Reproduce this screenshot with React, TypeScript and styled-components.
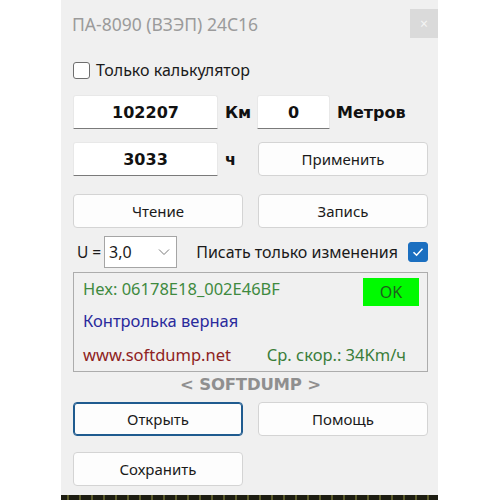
import * as React from 'react';
import styled, { createGlobalStyle } from 'styled-components';

const GlobalStyle = createGlobalStyle`
  html, body {
    margin: 0;
    padding: 0;
    background: #ffffff;
  }
  body {
    font-family: "Noto Sans", "Open Sans", sans-serif;
  }
`;

const Dialog = styled.div`
  width: 377px;
  height: 500px;
  margin-left: 61px;
  background: #f0f0f0;
  display: flex;
  flex-direction: column;
  box-sizing: border-box;
  font-size: 16px;
  color: #1a1a1a;
`;

const TitleBar = styled.div`
  display: flex;
  align-items: center;
  justify-content: space-between;
  height: 29px;
  margin-top: 9px;
  padding-left: 11px;
`;

const Title = styled.div`
  color: #9b9b9b;
  font-size: 17.5px;
`;

const CloseButton = styled.div`
  width: 28px;
  height: 29px;
  background: #dadada;
  color: #f4f4f4;
  display: flex;
  align-items: center;
  justify-content: center;
  font-size: 14px;
`;

const Body = styled.div`
  flex: 1;
  display: flex;
  flex-direction: column;
  padding: 0 10px 0 12px;
`;

const CheckRow = styled.label`
  display: flex;
  align-items: center;
  gap: 6px;
  margin-top: 23px;
  height: 18px;
`;

const Box = styled.span<{ $checked?: boolean }>`
  width: ${p => (p.$checked ? 20 : 17)}px;
  height: ${p => (p.$checked ? 20 : 17)}px;
  box-sizing: border-box;
  border-radius: 3px;
  border: 1px solid ${p => (p.$checked ? '#1b6fc0' : '#6e6e6e')};
  background: ${p => (p.$checked ? '#1b6fc0' : '#ffffff')};
  display: inline-flex;
  align-items: center;
  justify-content: center;
  flex: none;
`;

const Grid = styled.div<{ $top: number }>`
  display: grid;
  grid-template-columns: 170px 170px;
  column-gap: 15px;
  margin-top: ${p => p.$top}px;
`;

const Cell = styled.div`
  display: flex;
  align-items: center;
`;

const NumField = styled.div<{ $w: number }>`
  width: ${p => p.$w}px;
  height: 34px;
  box-sizing: border-box;
  background: #ffffff;
  border: 1px solid #e8e8e8;
  border-bottom: 1px solid #7a7a7a;
  border-radius: 3px 3px 0 0;
  display: flex;
  align-items: center;
  justify-content: center;
  font-family: "DejaVu Sans", Verdana, sans-serif;
  font-weight: bold;
  font-size: 16px;
  color: #111;
  flex: none;
`;

const Unit = styled.span`
  font-family: "DejaVu Sans", Verdana, sans-serif;
  font-weight: bold;
  font-size: 16px;
  margin-left: 7px;
  color: #111;
`;

const Button = styled.div<{ $focused?: boolean }>`
  width: 170px;
  height: 34px;
  box-sizing: border-box;
  background: #fdfdfd;
  border: 1px solid ${p => (p.$focused ? '#1f5b8f' : '#d4d4d4')};
  box-shadow: ${p => (p.$focused ? 'inset 0 0 0 1px #1f5b8f' : 'none')};
  border-radius: 4px;
  display: flex;
  align-items: center;
  justify-content: center;
  font-size: 15px;
  color: #1a1a1a;
`;

const URow = styled.div`
  display: flex;
  align-items: center;
  margin-top: 8px;
  height: 32px;
`;

const ULabel = styled.span`
  margin-left: 4px;
  width: 27px;
  font-size: 15.5px;
`;

const Select = styled.div`
  width: 73px;
  height: 32px;
  box-sizing: border-box;
  background: #ffffff;
  border: 1px solid #a5a5a5;
  display: flex;
  align-items: center;
  justify-content: space-between;
  padding: 0 6px 0 4px;
  font-size: 16px;
`;

const WriteOnly = styled.div`
  margin-left: auto;
  display: flex;
  align-items: center;
  gap: 10px;
  font-size: 16px;
`;

const Group = styled.div`
  margin-top: 4px;
  height: 100px;
  box-sizing: border-box;
  border: 1px solid #acacac;
  display: grid;
  grid-template-columns: minmax(0, 1fr) auto;
  grid-template-rows: 30px 35px 33px;
  padding: 0 8px 0 9px;
  font-size: 16.5px;
`;

const Line = styled.div<{ $color: string; $wide?: boolean }>`
  color: ${p => p.$color};
  display: flex;
  align-items: center;
  white-space: nowrap;
  grid-column: ${p => (p.$wide ? '1 / -1' : 'auto')};
  padding-right: ${p => (p.$wide ? 13 : 0)}px;
`;

const Speed = styled.span`
  color: #3a7d3a;
  margin-left: auto;
`;

const OkBadge = styled.div`
  width: 56px;
  height: 28px;
  margin-top: 5px;
  background: #00fa00;
  color: #1d5f1d;
  display: flex;
  align-items: center;
  justify-content: center;
  font-size: 16px;
`;

const Brand = styled.div`
  text-align: center;
  color: #8f8f8f;
  font-family: "DejaVu Sans", Verdana, sans-serif;
  font-weight: bold;
  font-size: 16.5px;
  height: 28px;
  line-height: 26px;
  letter-spacing: -0.2px;
`;

const Stripe = styled.div`
  height: 5px;
  background: repeating-linear-gradient(90deg, #1d1d12 0 6px, #5a5a2a 6px 8px, #1d1d12 8px 12px);
`;

const Check = () => (
  <svg width="14" height="14" viewBox="0 0 14 14">
    <path d="M2.5 7.2 L5.6 10.2 L11.5 3.8" fill="none" stroke="#ffffff" strokeWidth="1.6" />
  </svg>
);

const Chevron = () => (
  <svg width="12" height="8" viewBox="0 0 12 8">
    <path d="M1 1.5 L6 6.5 L11 1.5" fill="none" stroke="#7a7a7a" strokeWidth="1" />
  </svg>
);

const App = () => {
  return (
    <>
      <GlobalStyle />
      <Dialog>
        <TitleBar>
          <Title>ПА-8090 (ВЗЭП) 24С16</Title>
          <CloseButton>×</CloseButton>
        </TitleBar>
        <Body>
          <CheckRow>
            <Box />
            <span>Только калькулятор</span>
          </CheckRow>

          <Grid $top={16}>
            <Cell>
              <NumField $w={145}>102207</NumField>
              <Unit>Км</Unit>
            </Cell>
            <Cell>
              <NumField $w={73} style={{ marginLeft: -1 }}>0</NumField>
              <Unit>Метров</Unit>
            </Cell>
          </Grid>

          <Grid $top={13}>
            <Cell>
              <NumField $w={145}>3033</NumField>
              <Unit>ч</Unit>
            </Cell>
            <Button>Применить</Button>
          </Grid>

          <Grid $top={18}>
            <Button>Чтение</Button>
            <Button>Запись</Button>
          </Grid>

          <URow>
            <ULabel>U =</ULabel>
            <Select>
              <span>3,0</span>
              <Chevron />
            </Select>
            <WriteOnly>
              <span>Писать только изменения</span>
              <Box $checked>
                <Check />
              </Box>
            </WriteOnly>
          </URow>

          <Group>
            <Line $color="#3f8a3f">Hex: 06178E18_002E46BF</Line>
            <OkBadge>OK</OkBadge>
            <Line $color="#2a2a9c" $wide>Контролька верная</Line>
            <Line $color="#8e2222" $wide>
              www.softdump.net
              <Speed>Ср. скор.: 34Km/ч</Speed>
            </Line>
          </Group>

          <Brand>&lt; SOFTDUMP &gt;</Brand>

          <Grid $top={2}>
            <Button $focused>Открыть</Button>
            <Button>Помощь</Button>
          </Grid>
          <Grid $top={16}>
            <Button>Сохранить</Button>
          </Grid>
        </Body>
        <Stripe />
      </Dialog>
    </>
  );
};

export default App;
